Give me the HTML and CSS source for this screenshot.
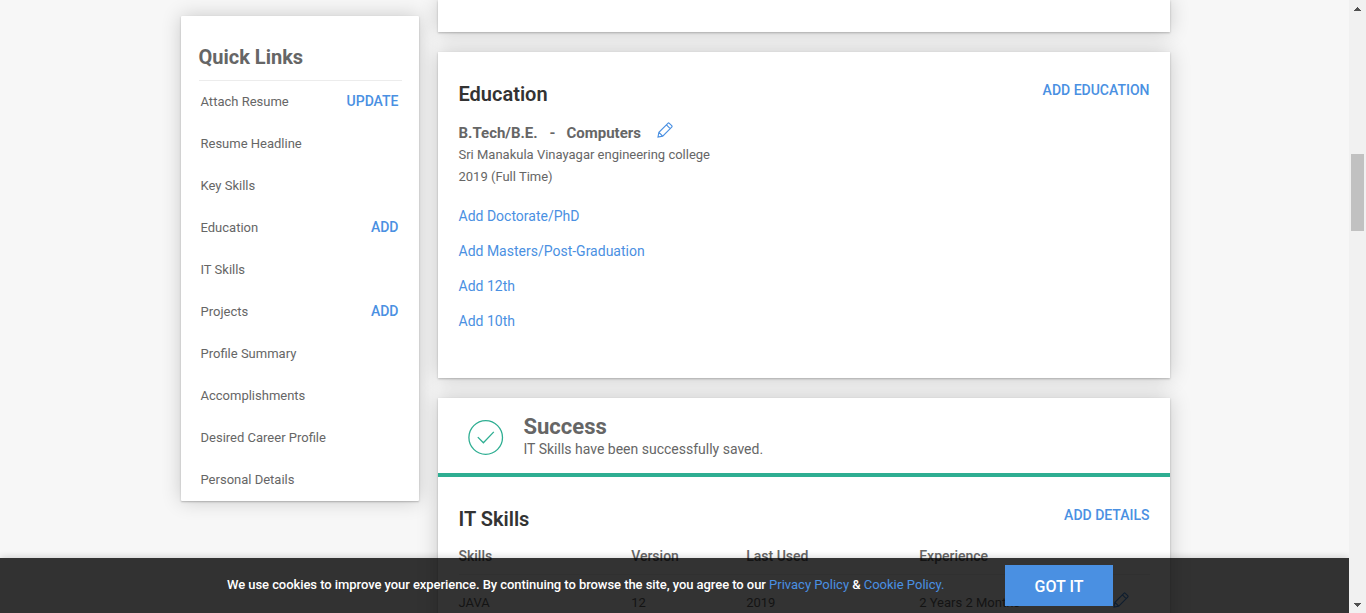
FILE: index.html
```html
<!DOCTYPE html>
<html lang="en">
<head>
<meta charset="utf-8">
<title>Profile</title>
<link rel="stylesheet" href="styles.css">
</head>
<body>
<div class="window">
  <div class="page">
    <aside class="quick-links">
      <h2 class="quick-title">Quick Links</h2>
      <ul class="quick-list">
        <li class="quick-item"><span>Attach Resume</span><a class="quick-action">UPDATE</a></li>
        <li class="quick-item"><span>Resume Headline</span></li>
        <li class="quick-item"><span>Key Skills</span></li>
        <li class="quick-item"><span>Education</span><a class="quick-action">ADD</a></li>
        <li class="quick-item"><span>IT Skills</span></li>
        <li class="quick-item"><span>Projects</span><a class="quick-action">ADD</a></li>
        <li class="quick-item"><span>Profile Summary</span></li>
        <li class="quick-item"><span>Accomplishments</span></li>
        <li class="quick-item"><span>Desired Career Profile</span></li>
        <li class="quick-item"><span>Personal Details</span></li>
      </ul>
    </aside>
    <main class="content">
      <section class="card card-previous"></section>
      <section class="card card-education">
        <header class="card-head">
          <h2 class="card-title">Education</h2>
          <a class="card-action">ADD EDUCATION</a>
        </header>
        <div class="degree">
          <span class="degree-name">B.Tech/B.E.</span><span class="degree-dash">-</span><span class="degree-course">Computers</span>
          <svg class="pencil" viewBox="0 0 16 16"><path d="M1 15l.9-4.7 9-9a1 1 0 0 1 1.4 0l2.4 2.4a1 1 0 0 1 0 1.4l-9 9zM9.4 2.8l3.8 3.8M1.9 10.3l3.8 3.8"/></svg>
        </div>
        <p class="school">Sri Manakula Vinayagar engineering college</p>
        <p class="school">2019 (Full Time)</p>
        <div class="add-links">
          <a>Add Doctorate/PhD</a>
          <a>Add Masters/Post-Graduation</a>
          <a>Add 12th</a>
          <a>Add 10th</a>
        </div>
      </section>
      <section class="card card-skills">
        <div class="notice">
          <svg class="notice-icon" viewBox="0 0 36 36"><circle cx="17.7" cy="18.5" r="16.8"/><path d="M9.8 18.1l5.6 5.7L25.8 12.9"/></svg>
          <div>
            <h3 class="notice-title">Success</h3>
            <p class="notice-text">IT Skills have been successfully saved.</p>
          </div>
        </div>
        <header class="card-head">
          <h2 class="card-title">IT Skills</h2>
          <a class="card-action">ADD DETAILS</a>
        </header>
        <div class="table">
          <div class="row row-head"><span>Skills</span><span>Version</span><span>Last Used</span><span>Experience</span></div>
          <div class="row row-body"><span>JAVA</span><span>12</span><span>2019</span><span>2 Years 2 Months</span>
            <svg class="pencil" viewBox="0 0 16 16"><path d="M1 15l.9-4.7 9-9a1 1 0 0 1 1.4 0l2.4 2.4a1 1 0 0 1 0 1.4l-9 9zM9.4 2.8l3.8 3.8M1.9 10.3l3.8 3.8"/></svg>
          </div>
        </div>
      </section>
    </main>
    <div class="cookie-bar">
      <p class="cookie-text">We use cookies to improve your experience. By continuing to browse the site, you agree to our <a>Privacy Policy</a> &amp; <a>Cookie Policy.</a></p>
      <button class="cookie-button">GOT IT</button>
    </div>
  </div>
  <div class="scrollbar">
    <svg class="arrow" viewBox="0 0 7 4" shape-rendering="crispEdges"><path d="M3 0h1v1h1v1h1v1h1v1H0V3h1V2h1V1h1z"/></svg>
    <div class="thumb"></div>
    <svg class="arrow arrow-down" viewBox="0 0 7 4" shape-rendering="crispEdges"><path d="M0 0h7v1H6v1H5v1H4v1H3V3H2V2H1V1H0z"/></svg>
  </div>
</div>
</body>
</html>
```
FILE: styles.css
```css
* { box-sizing: border-box; }
body, h2, h3, p, ul { margin: 0; padding: 0; }
body {
  font-family: Roboto, "Liberation Sans", sans-serif;
  color: #666;
  background: #f7f7f7;
  overflow: hidden;
}
a { color: #4a90e2; }
.window { display: flex; height: 613px; }
.page {
  position: relative;
  display: flex;
  flex: 1;
  align-items: flex-start;
  gap: 19px;
  padding-left: 181px;
  overflow: hidden;
}
.quick-links, .card {
  background: #fff;
  box-shadow: 0 1px 2px rgba(0, 0, 0, .24), 0 0 20px rgba(0, 0, 0, .19);
}
.quick-links {
  width: 238px;
  height: 485px;
  margin-top: 16px;
  padding: 26px 17.5px 0 17.5px;
  border-radius: 1px;
}
.quick-title {
  height: 39px;
  font-size: 20px;
  line-height: 30px;
  font-weight: 700;
  border-bottom: 1px solid #ececec;
}
.quick-list { list-style: none; }
.quick-item {
  display: flex;
  justify-content: space-between;
  align-items: center;
  height: 42px;
  padding: 0 3px 2px 2px;
  font-size: 13px;
}
.quick-action { font-size: 14px; font-weight: 500; }
.content { display: flex; flex-direction: column; gap: 20px; width: 732px; }
.card-previous { height: 32px; }
.card-education { height: 326px; }
.card-skills { height: 260px; }
.card-head {
  display: flex;
  justify-content: space-between;
  padding: 30px 20.5px 0;
}
.card-title { font-size: 20px; line-height: 24px; font-weight: 600; color: #333; }
.card-action { font-size: 14px; line-height: 16px; font-weight: 500; }
.degree {
  display: flex;
  height: 24px;
  margin-top: 15px;
  padding-left: 20.5px;
  font-size: 15px;
  line-height: 24px;
  font-weight: 700;
}
.degree-name { width: 91px; }
.degree-dash { width: 17px; }
.degree-course { width: 90px; }
.pencil { width: 16px; height: 16px; fill: none; stroke: #4a90e2; stroke-width: 1.15; }
.degree .pencil { margin-top: 1px; }
.school { padding-left: 20.5px; font-size: 13px; line-height: 22px; }
.school:nth-of-type(1) { margin-top: -1px; }
.add-links {
  display: flex;
  flex-direction: column;
  padding: 11px 20.5px 0;
  font-size: 14px;
  line-height: 35px;
}
.notice {
  display: flex;
  height: 79px;
  padding: 16px 0 0 30px;
  border-bottom: 4px solid #2eae92;
}
.notice-icon {
  width: 36px;
  height: 36px;
  margin: 5px 19.5px 0 0;
  fill: none;
  stroke: #2eae92;
  stroke-width: 1.3;
}
.notice-title { font-size: 22px; line-height: 26px; font-weight: 700; }
.notice-text { font-size: 14px; line-height: 18px; }
.table { padding: 11px 20.5px 0; font-size: 14px; }
.row { display: grid; grid-template-columns: 172.7px 115px 173px 194px 16px; align-items: center; }
.row-head { height: 33px; padding-bottom: 4px; font-weight: 500; border-bottom: 1px solid #eee; }
.row-body { height: 54px; font-size: 13px; }
.row-body .pencil { margin-top: -4px; }
.cookie-bar {
  position: absolute;
  left: 0;
  right: 0;
  bottom: 0;
  display: flex;
  align-items: flex-start;
  height: 55px;
  padding: 7px 0 0 227px;
  background: rgba(0, 0, 0, .8);
  box-shadow: 0 0 8px rgba(0, 0, 0, .2);
}
.cookie-text {
  width: 778px;
  font-size: 13px;
  line-height: 39px;
  font-weight: 500;
  letter-spacing: -.06px;
  color: #fff;
  white-space: nowrap;
}
.cookie-text a { font-weight: 400; letter-spacing: 0; }
.cookie-button {
  width: 108px;
  height: 41px;
  padding: 1px 0 0;
  border: 0;
  background: #4a90e2;
  color: #fff;
  font: 500 16px Roboto, sans-serif;
}
.scrollbar {
  display: flex;
  flex-direction: column;
  width: 17px;
  padding: 7px 2px 6px;
  background: #f1f1f1;
}
.arrow { width: 7px; height: 4px; margin-left: 3px; fill: #505050; }
.thumb { width: 13px; height: 77px; margin-top: 143px; background: #c1c1c1; }
.arrow-down { margin-top: auto; }
```
